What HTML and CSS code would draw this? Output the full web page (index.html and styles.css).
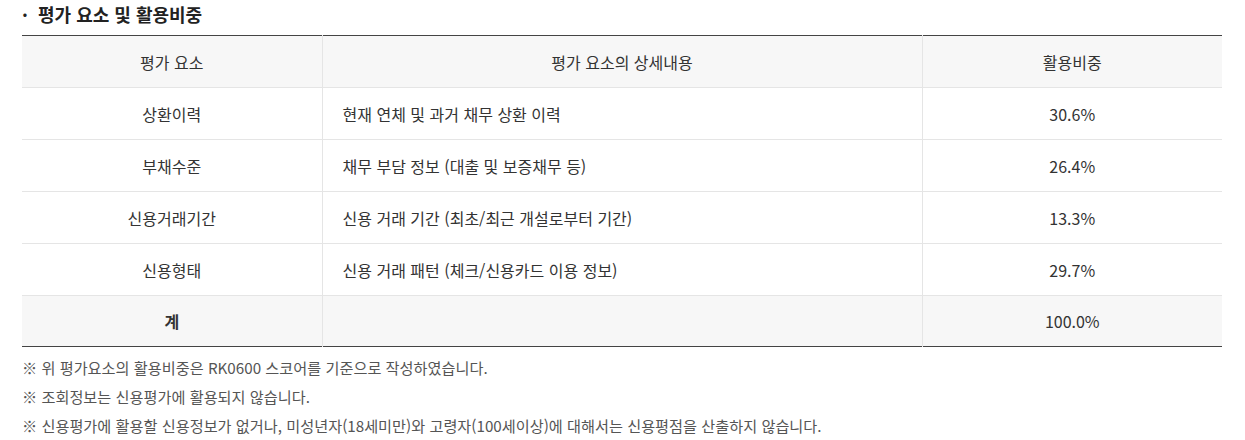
FILE: index.html
```html
<!DOCTYPE html>
<html lang="ko">
<head>
<meta charset="utf-8">
<link rel="stylesheet" href="styles.css">
</head>
<body>
<div class="wrap">
  <h3 class="title"><span class="dot">·</span>평가 요소 및 활용비중</h3>
  <table class="tbl">
    <colgroup><col class="c1"><col class="c2"><col class="c3"></colgroup>
    <thead>
      <tr><th>평가 요소</th><th>평가 요소의 상세내용</th><th>활용비중</th></tr>
    </thead>
    <tbody>
      <tr><td>상환이력</td><td class="left">현재 연체 및 과거 채무 상환 이력</td><td>30.6%</td></tr>
      <tr><td>부채수준</td><td class="left">채무 부담 정보 (대출 및 보증채무 등)</td><td>26.4%</td></tr>
      <tr><td>신용거래기간</td><td class="left">신용 거래 기간 (최초/최근 개설로부터 기간)</td><td>13.3%</td></tr>
      <tr><td>신용형태</td><td class="left">신용 거래 패턴 (체크/신용카드 이용 정보)</td><td>29.7%</td></tr>
    </tbody>
    <tfoot>
      <tr><th>계</th><td></td><td>100.0%</td></tr>
    </tfoot>
  </table>
  <ul class="notes">
    <li>※ 위 평가요소의 활용비중은 RK0600 스코어를 기준으로 작성하였습니다.</li>
    <li>※ 조회정보는 신용평가에 활용되지 않습니다.</li>
    <li>※ 신용평가에 활용할 신용정보가 없거나, 미성년자(18세미만)와 고령자(100세이상)에 대해서는 신용평점을 산출하지 않습니다.</li>
  </ul>
</div>
</body>
</html>
```
FILE: styles.css
```css
* { box-sizing: border-box; }
html, body { margin: 0; padding: 0; background: #fff; }
body {
  font-family: "Noto Sans CJK KR", "Noto Sans", sans-serif;
  color: #333;
}
.wrap { padding: 0 23px 0 22px; width: 1245px; }
.title {
  margin: 0;
  height: 35px;
  padding-top: 2px;
  font-size: 18px;
  font-weight: 700;
  line-height: 24px;
  color: #222;
  display: flex;
}
.title .dot { width: 16px; }
.tbl {
  width: 1200px;
  border-collapse: collapse;
  border-top: 1px solid #444;
  border-bottom: 1px solid #444;
  font-size: 16px;
  table-layout: fixed;
}
.c1 { width: 300px; }
.c2 { width: 600px; }
.c3 { width: 300px; }
.tbl th, .tbl td {
  height: 52px;
  padding: 0 20px;
  text-align: center;
  font-weight: 400;
  border-bottom: 1px solid #e5e5e5;
  border-left: 1px solid #e5e5e5;
  color: #333;
}
.tbl th:first-child, .tbl td:first-child { border-left: none; }
.tbl thead th { background: #f7f7f7; }
.tbl tfoot th, .tbl tfoot td { background: #f7f7f7; border-bottom: none; height: 51px; }
.tbl tfoot th { font-weight: 700; }
.tbl td.left { text-align: left; }
.notes {
  list-style: none;
  margin: 0;
  padding: 6px 0 0 0;
  font-size: 15.2px;
  color: #555;
}
.notes li { line-height: 29px; }
```
